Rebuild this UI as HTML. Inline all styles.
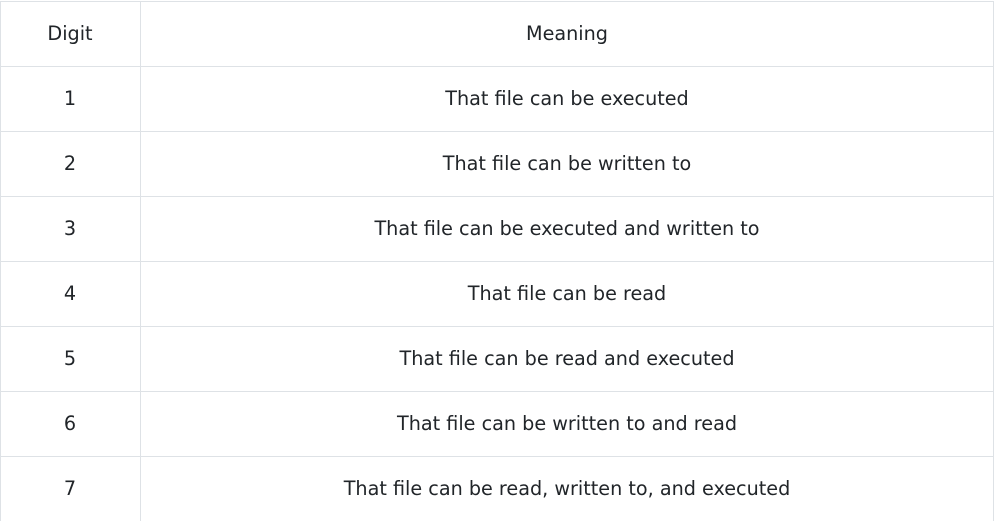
<!DOCTYPE html>
<html><head><style>
body{margin:0;width:994px;height:521px;background:#fff;overflow:hidden;font-family:"DejaVu Sans","Liberation Sans",sans-serif;color:#212529;font-size:19.2px;}
.h{position:absolute;left:0;width:994px;height:1px;background:#dee2e6}
.v{position:absolute;top:1px;height:520px;width:1px;background:#dee2e6}
.c{position:absolute;height:65px;line-height:65px;text-align:center}
</style></head><body>
<div class="h" style="top:1px"></div>
<div class="h" style="top:66px"></div>
<div class="h" style="top:131px"></div>
<div class="h" style="top:196px"></div>
<div class="h" style="top:261px"></div>
<div class="h" style="top:326px"></div>
<div class="h" style="top:391px"></div>
<div class="h" style="top:456px"></div>
<div class="v" style="left:0"></div>
<div class="v" style="left:140px"></div>
<div class="v" style="left:993px"></div>
<div class="c" style="top:1px;left:0;width:140px">Digit</div><div class="c" style="top:1px;left:141px;width:852px">Meaning</div>
<div class="c" style="top:66px;left:0;width:140px">1</div><div class="c" style="top:66px;left:141px;width:852px">That file can be executed</div>
<div class="c" style="top:131px;left:0;width:140px">2</div><div class="c" style="top:131px;left:141px;width:852px">That file can be written to</div>
<div class="c" style="top:196px;left:0;width:140px">3</div><div class="c" style="top:196px;left:141px;width:852px">That file can be executed and written to</div>
<div class="c" style="top:261px;left:0;width:140px">4</div><div class="c" style="top:261px;left:141px;width:852px">That file can be read</div>
<div class="c" style="top:326px;left:0;width:140px">5</div><div class="c" style="top:326px;left:141px;width:852px">That file can be read and executed</div>
<div class="c" style="top:391px;left:0;width:140px">6</div><div class="c" style="top:391px;left:141px;width:852px">That file can be written to and read</div>
<div class="c" style="top:456px;left:0;width:140px">7</div><div class="c" style="top:456px;left:141px;width:852px">That file can be read, written to, and executed</div>
</body></html>
